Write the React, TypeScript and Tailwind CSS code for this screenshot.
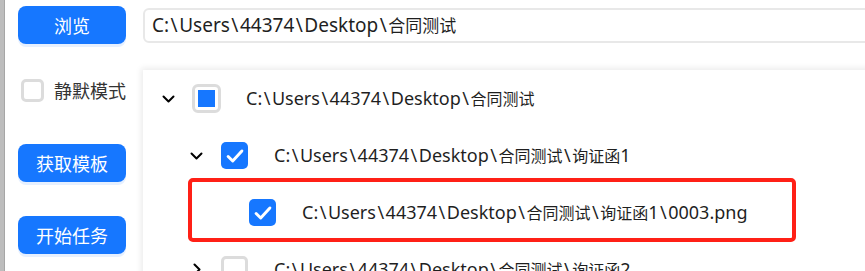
const font = { fontFamily: '"Noto Sans", "Noto Sans CJK SC", sans-serif' }

type Node = { path: string; level: number; state: 'checked' | 'partial' | 'empty'; open?: boolean; leaf?: boolean }

const rows: Node[] = [
  { path: 'C:\\Users\\44374\\Desktop\\合同测试', level: 0, state: 'partial', open: true },
  { path: 'C:\\Users\\44374\\Desktop\\合同测试\\询证函1', level: 1, state: 'checked', open: true },
  { path: 'C:\\Users\\44374\\Desktop\\合同测试\\询证函1\\0003.png', level: 2, state: 'checked', leaf: true },
  { path: 'C:\\Users\\44374\\Desktop\\合同测试\\询证函2', level: 1, state: 'empty', open: false },
]

// the app's UI font draws CJK a bit smaller than latin and backslashes wide
function PathText({ text, big }: { text: string; big?: boolean }) {
  const parts = text.split(/([\u4e00-\u9fff]+|\\)/).filter(Boolean)
  return (
    <span className={big ? 'whitespace-nowrap text-[19px]' : 'whitespace-nowrap text-[18px]'}>
      {parts.map((p, i) =>
        p === '\\' ? (
          <span key={i} className="px-[1.5px]">\</span>
        ) : /[\u4e00-\u9fff]/.test(p) ? (
          <span key={i} className={big ? 'text-[17px]' : 'text-[16px]'}>{p}</span>
        ) : (
          <span key={i}>{p}</span>
        )
      )}
    </span>
  )
}

function Chevron({ open }: { open?: boolean }) {
  return open ? (
    <svg viewBox="0 0 13 8" className="w-[13px] h-[8px]" fill="none" stroke="black" strokeWidth="2" strokeLinecap="round" strokeLinejoin="round">
      <path d="M1.5 1.5l5 5 5-5" />
    </svg>
  ) : (
    <svg viewBox="0 0 8 13" className="w-[8px] h-[13px]" fill="none" stroke="black" strokeWidth="2" strokeLinecap="round" strokeLinejoin="round">
      <path d="M1.5 1.5l5 5-5 5" />
    </svg>
  )
}

function Box({ state }: { state: Node['state'] }) {
  if (state === 'checked') {
    return (
      <div className="w-[27px] h-[27px] rounded-[5px] bg-[#1677ff] flex items-center justify-center shrink-0">
        <svg viewBox="0 0 24 24" className="w-[22px] h-[22px]" fill="none" stroke="white" strokeWidth="3.2" strokeLinecap="round" strokeLinejoin="round">
          <path d="M4.5 12.5l5 5L19.5 6.5" />
        </svg>
      </div>
    )
  }
  if (state === 'partial') {
    return (
      <div className="w-[29px] h-[29px] rounded-[6px] border-[3px] border-[#dcdcdc] bg-white flex items-center justify-center shrink-0">
        <div className="w-[17px] h-[17px] bg-[#1677ff]" />
      </div>
    )
  }
  return <div className="w-[27px] h-[27px] rounded-[5px] border-[3px] border-[#dcdcdc] bg-white shrink-0" />
}

function BlueButton({ label }: { label: string }) {
  return (
    <button
      className="w-[108px] h-[38px] shrink-0 rounded-[8px] bg-[#1677ff] text-white text-[18px] shadow-[0_3px_0_#e6f0ff]"
      style={{ fontFamily: '"Noto Sans CJK SC", sans-serif' }}
    >
      {label}
    </button>
  )
}

export default function App() {
  return (
    <div className="w-[865px] h-[271px] bg-white flex overflow-hidden text-[#1f1f1f]" style={font}>
      <div className="w-[5px] shrink-0 bg-[#bdbdbd] border-r border-[#a6a6a6]" />

      <div className="w-[138px] shrink-0 pl-[13px] pt-[6px] flex flex-col">
        <BlueButton label="浏览" />
        <label className="mt-[33px] ml-[3px] flex items-center gap-[10px] shrink-0">
          <span className="w-[23px] h-[23px] rounded-[5px] border-[3px] border-[#dcdcdc] bg-white" />
          <span className="text-[18px] text-[#333]" style={{ fontFamily: '"Noto Sans CJK SC", sans-serif' }}>静默模式</span>
        </label>
        <div className="mt-[40px] shrink-0"><BlueButton label="获取模板" /></div>
        <div className="mt-[34px] shrink-0"><BlueButton label="开始任务" /></div>
      </div>

      <div className="flex-1 min-w-0 flex flex-col">
        <div className="mt-[8px] h-[35px] shrink-0 w-[740px] rounded-[6px] border-2 border-[#e8e8e8] flex items-center pl-[7px]">
          <PathText text={'C:\\Users\\44374\\Desktop\\合同测试'} big />
        </div>

        <div className="relative mt-[27px] shrink-0 w-[740px] bg-white shadow-[-2px_-2px_6px_rgba(0,0,0,0.08)]">
          {rows.map((r, i) => (
            <div key={i} className="h-[57px] flex items-center" style={{ paddingLeft: 19 + r.level * 28 }}>
              <span className="w-[13px] flex justify-center shrink-0">
                {r.leaf ? null : <Chevron open={r.open} />}
              </span>
              <span className="ml-[17px] w-[29px] flex justify-center shrink-0">
                <Box state={r.state} />
              </span>
              <span className="ml-[25px]">
                <PathText text={r.path} />
              </span>
            </div>
          ))}
          <div className="absolute left-[45px] top-[108px] w-[608px] h-[64px] border-[4px] border-[#ff2016] rounded-[5px]" />
        </div>
      </div>
    </div>
  )
}
